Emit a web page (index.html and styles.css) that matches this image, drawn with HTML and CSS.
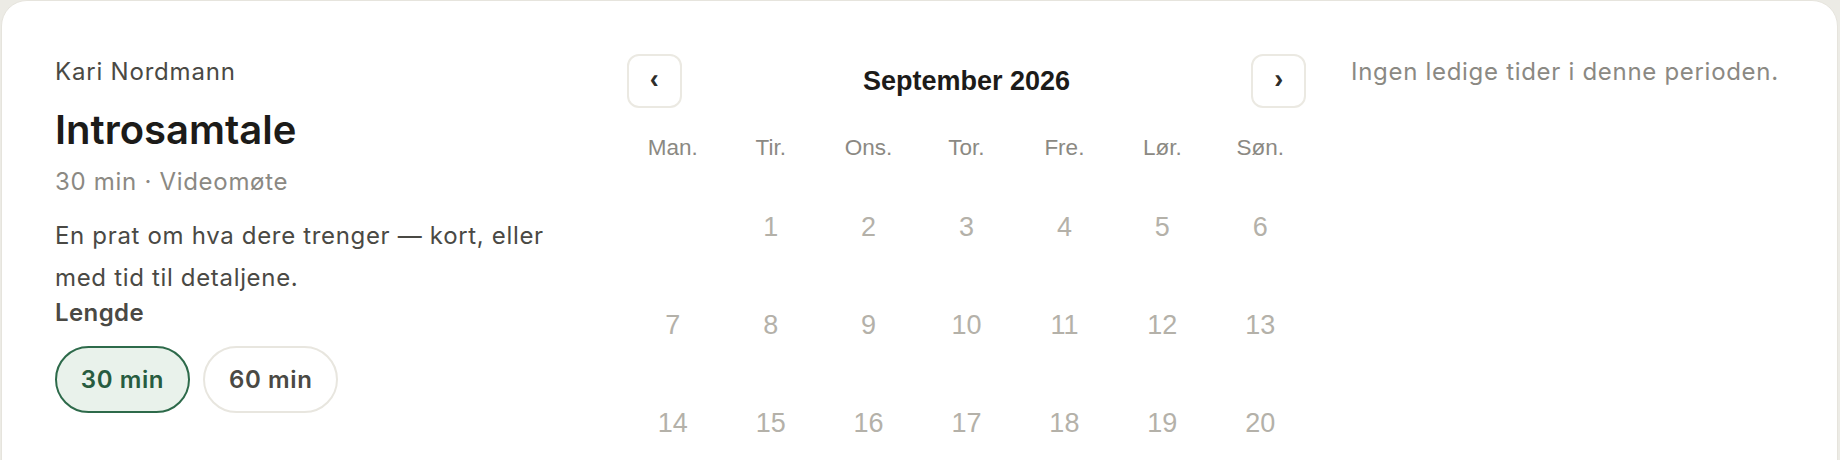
FILE: index.html
```html
<!DOCTYPE html>
<html lang="no">
<head>
<meta charset="utf-8">
<title>Introsamtale</title>
<link rel="stylesheet" href="styles.css">
</head>
<body>
<section class="card">
  <div class="info">
    <p class="host">Kari Nordmann</p>
    <h1 class="title">Introsamtale</h1>
    <p class="meta">30 min · Videomøte</p>
    <p class="desc">En prat om hva dere trenger — kort, eller med tid til detaljene.</p>
    <p class="label">Lengde</p>
    <div class="pills">
      <button class="pill pill-active" type="button">30 min</button>
      <button class="pill" type="button">60 min</button>
    </div>
  </div>

  <div class="calendar">
    <div class="cal-head">
      <button class="nav" type="button" aria-label="Forrige måned">‹</button>
      <h2 class="month">September 2026</h2>
      <button class="nav" type="button" aria-label="Neste måned">›</button>
    </div>
    <div class="grid">
      <div class="dow">Man.</div>
      <div class="dow">Tir.</div>
      <div class="dow">Ons.</div>
      <div class="dow">Tor.</div>
      <div class="dow">Fre.</div>
      <div class="dow">Lør.</div>
      <div class="dow">Søn.</div>

      <div class="day day-empty"></div>
      <div class="day">1</div>
      <div class="day">2</div>
      <div class="day">3</div>
      <div class="day">4</div>
      <div class="day">5</div>
      <div class="day">6</div>

      <div class="day">7</div>
      <div class="day">8</div>
      <div class="day">9</div>
      <div class="day">10</div>
      <div class="day">11</div>
      <div class="day">12</div>
      <div class="day">13</div>

      <div class="day">14</div>
      <div class="day">15</div>
      <div class="day">16</div>
      <div class="day">17</div>
      <div class="day">18</div>
      <div class="day">19</div>
      <div class="day">20</div>
    </div>
  </div>

  <div class="slots">
    <p class="empty-msg">Ingen ledige tider i denne perioden.</p>
  </div>
</section>
</body>
</html>
```

FILE: styles.css
```css
* {
  box-sizing: border-box;
}

html,
body {
  margin: 0;
  padding: 0;
}

body {
  width: 1840px;
  height: 460px;
  overflow: hidden;
  padding: 0 2px 0 1px;
  background: #ecebe5;
  font-family: Inter, "Liberation Sans", sans-serif;
}

.card {
  min-height: 620px;
  background: #ffffff;
  border: 1px solid #e6e4dd;
  border-radius: 26px;
  padding: 53px 53px 0 53px;
  display: grid;
  grid-template-columns: 527px 679px 1fr;
  column-gap: 45px;
  align-items: start;
}

/* ---------- left info column ---------- */
.info p {
  margin: 0;
}

.host {
  font-size: 24px;
  line-height: 36px;
  letter-spacing: 0.8px;
  color: #4a4944;
}

.title {
  margin: 15.7px 0 0;
  font-size: 40px;
  line-height: 48px;
  font-weight: 600;
  color: #1c1b19;
}

.info .meta {
  margin-top: 11.6px;
  font-size: 24px;
  line-height: 34px;
  letter-spacing: 0.7px;
  color: #8b8983;
}

.info .desc {
  margin-top: 16px;
  font-size: 24px;
  line-height: 41.7px;
  letter-spacing: 0.67px;
  color: #4a4944;
}

.info .label {
  font-size: 24px;
  line-height: 27.6px;
  font-weight: 600;
  letter-spacing: 0.4px;
  color: #4a4944;
}

.pills {
  margin-top: 19.6px;
  display: flex;
  gap: 13.3px;
}

.pill {
  width: 135px;
  height: 66.7px;
  padding: 0;
  border: 2px solid #e8e6df;
  border-radius: 999px;
  background: #ffffff;
  font-family: Inter, "Liberation Sans", sans-serif;
  font-size: 24px;
  font-weight: 600;
  letter-spacing: 0.6px;
  color: #4a4944;
  display: flex;
  align-items: center;
  justify-content: center;
}

.pill-active {
  border-color: #2d6a4a;
  background: #e9f2eb;
  color: #275c40;
}

/* ---------- calendar ---------- */
.calendar {
  display: flex;
  flex-direction: column;
  gap: 12px;
  font-family: "Liberation Sans", Arial, sans-serif;
}

.cal-head {
  height: 54.3px;
  display: flex;
  align-items: center;
  justify-content: space-between;
}

.nav {
  width: 54.6px;
  height: 54.3px;
  padding: 0 0 3px;
  border: 2px solid #ebe9e2;
  border-radius: 12px;
  background: #ffffff;
  font-family: "Liberation Sans", Arial, sans-serif;
  font-size: 27px;
  font-weight: 700;
  color: #2e2d2a;
  display: flex;
  align-items: center;
  justify-content: center;
}

.month {
  margin: 0;
  font-size: 27px;
  line-height: 1;
  font-weight: 700;
  color: #1c1b19;
}

.grid {
  display: grid;
  grid-template-columns: repeat(7, 1fr);
  grid-template-rows: 55px;
  grid-auto-rows: 91.6px;
  gap: 6.3px;
}

.dow {
  display: flex;
  align-items: center;
  justify-content: center;
  font-size: 22.5px;
  color: #8b8983;
}

.day {
  display: flex;
  align-items: center;
  justify-content: center;
  font-size: 27px;
  color: #b4b1a9;
}

/* ---------- slots column ---------- */
.empty-msg {
  margin: 0;
  font-size: 24px;
  line-height: 36px;
  letter-spacing: 0.7px;
  color: #8b8983;
}
```
